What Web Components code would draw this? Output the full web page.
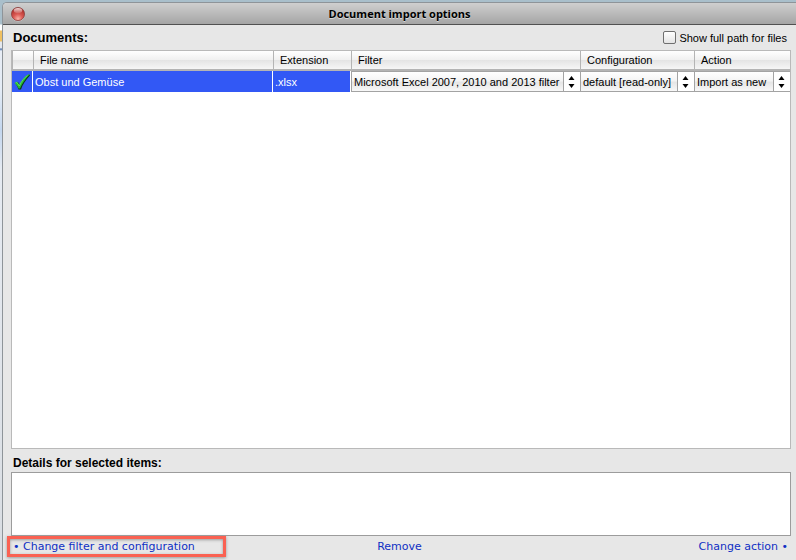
<!DOCTYPE html>
<html lang="en">
<head>
<meta charset="utf-8">
<title>Document import options</title>
<style>
  body {
    margin: 0;
    height: 100vh;
    display: flex;
    overflow: hidden;
    box-sizing: border-box;
    padding: 2px 0 0 2px;
    background: linear-gradient(#a9bfcb 0, #a9bfcb 24px, #fff 25px, #fff 30px, #f0c060 31px, #f0c060 41px, #e4e8ee 42px, #e4e8ee 48px, #4a6ea8 49px, #e8edf5 51px, #e4ecf6 90px, #c3d6ee 130px, #e6ebf2 170px, #d9dde2);
    font: 11px/14px "Liberation Sans", Arial, sans-serif;
    color: #000;
  }
</style>
</head>
<body>

<import-window caption="Document import options">
  <section-head slot="top" text="Documents:">
    <check-option>Show full path for files</check-option>
  </section-head>
  <document-table></document-table>
  <details-box label="Details for selected items:"></details-box>
  <action-bar></action-bar>
</import-window>

<script>
class ImportWindow extends HTMLElement {
  constructor() {
    super();
    this.attachShadow({mode: 'open'});
  }

  connectedCallback() {
    this.shadowRoot.innerHTML = `
      <style>
        :host {
          flex: 1;
          min-width: 0;
          display: flex;
          flex-direction: column;
          border: 1px solid #8e9499;
          border-width: 1px 0 0 1px;
          border-radius: 5px 0 0 0;
          background: #e7e7e7;
          overflow: hidden;
        }
        header {
          display: grid;
          grid-template-columns: 32px 1fr 32px;
          align-items: center;
          height: 21px;
          border-bottom: 1px solid #515151;
          background: linear-gradient(#cfcfcf, #a5a5a5);
        }
        h1 {
          margin: 0;
          text-align: center;
          font: bold 11px/14px "Open Sans", "DejaVu Sans", sans-serif;
          text-shadow: 0 1px 0 #d8d8d8;
        }
        button {
          display: flex;
          padding: 0;
          margin-left: 7px;
          width: 16px;
          border: none;
          background: none;
        }
        main {
          flex: 1;
          min-height: 0;
          display: flex;
          flex-direction: column;
          padding: 0 5px 0 8px;
        }
      </style>
      <header>
        <button aria-label="Close">
          <svg width="16" height="16" viewBox="0 0 16 16">
            <defs>
              <radialGradient id="ball" cx=".5" cy=".85" r=".85">
                <stop offset="0" stop-color="#f8b0a6"/>
                <stop offset=".4" stop-color="#dc5a54"/>
                <stop offset="1" stop-color="#a02420"/>
              </radialGradient>
              <linearGradient id="shine" x2="0" y2="1">
                <stop offset="0" stop-color="#fff" stop-opacity=".85"/>
                <stop offset="1" stop-color="#fff" stop-opacity=".1"/>
              </linearGradient>
            </defs>
            <circle cx="8" cy="8.5" r="7" fill="#e0dada" opacity=".7"/>
            <circle cx="8" cy="8" r="6.6" fill="url(#ball)" stroke="#8a4442" stroke-width=".8"/>
            <ellipse cx="8" cy="4.6" rx="4.2" ry="2.7" fill="url(#shine)"/>
          </svg>
        </button>
        <h1>${this.getAttribute('caption')}</h1>
      </header>
      <main>
        <slot name="top"></slot>
        <slot></slot>
      </main>
    `;
  }
}

class SectionHead extends HTMLElement {
  constructor() {
    super();
    this.attachShadow({mode: 'open'});
  }

  connectedCallback() {
    this.shadowRoot.innerHTML = `
      <style>
        :host {
          display: flex;
          align-items: center;
          justify-content: space-between;
          height: 25px;
          padding: 0 4px 0 2px;
        }
        h2 {
          margin: 0;
          font: bold 13px/16px "Liberation Sans", Arial, sans-serif;
        }
      </style>
      <h2>${this.getAttribute('text')}</h2>
      <slot></slot>
    `;
  }
}

class CheckOption extends HTMLElement {
  constructor() {
    super();
    this.attachShadow({mode: 'open'});
    this.shadowRoot.innerHTML = `
      <style>
        :host {
          display: block;
        }
        label {
          display: flex;
          align-items: center;
          gap: 3px;
        }
        input {
          appearance: none;
          margin: 0;
          width: 13px;
          height: 13px;
          border: 1px solid #6f6f6f;
          border-radius: 2px;
          background: linear-gradient(#fff, #e4e4e4);
        }
        input:checked {
          background: #3258f5;
        }
      </style>
      <label><input type="checkbox"><slot></slot></label>
    `;
  }
}

class DropDown extends HTMLElement {
  constructor() {
    super();
    this.attachShadow({mode: 'open'});
  }

  connectedCallback() {
    this.shadowRoot.innerHTML = `
      <style>
        :host {
          display: grid;
          grid-template-columns: 1fr 17px;
          height: 21px;
          box-sizing: border-box;
          border: 1px solid #a3a3a3;
          border-right: none;
          background: #fff;
        }
        select {
          appearance: none;
          grid-area: 1 / 1 / 2 / 3;
          min-width: 0;
          margin: 0;
          padding: 0 18px 0 2px;
          border: none;
          border-radius: 0;
          outline: none;
          background: linear-gradient(#fff 0, #f4f4f4 45%, #e6e6e6 55%, #f8f8f8 100%);
          color: #000;
          font: inherit;
        }
        svg {
          grid-area: 1 / 2;
          z-index: 1;
          box-sizing: border-box;
          width: 17px;
          height: 19px;
          border-left: 1px solid #a3a3a3;
          background: #fff;
          pointer-events: none;
        }
      </style>
      <select aria-label="${this.getAttribute('label')}">
        <option>${this.getAttribute('value')}</option>
      </select>
      <svg viewBox="0 0 16 19"><path d="M7.500 4l3 4h-6zM7.500 16l3-4h-6z"/></svg>
    `;
  }
}

class DocumentTable extends HTMLElement {
  constructor() {
    super();
    this.attachShadow({mode: 'open'});
    this.shadowRoot.innerHTML = `
      <style>
        :host {
          flex: 1;
          min-height: 0;
          display: block;
          border: 1px solid #b9b9b9;
          background: #fff;
          overflow: hidden;
        }
        table {
          width: 100%;
          table-layout: fixed;
          border-collapse: separate;
          border-spacing: 0;
        }
        .mark { width: 21px; }
        .ext { width: 78px; }
        .filter { width: 229px; }
        .config { width: 114px; }
        .action { width: 96px; }
        th, td {
          box-sizing: border-box;
          padding: 0;
          text-align: left;
          font-weight: normal;
          white-space: nowrap;
        }
        th {
          height: 20px;
          padding-left: 6px;
          border-left: 1px solid #b4b4b4;
          border-bottom: 2px solid #b4b4b4;
          background: linear-gradient(#fff, #f0f0f0 50%, #e4e4e4 51%, #f6f6f6);
        }
        td {
          height: 21px;
        }
        .plain {
          padding-left: 2px;
          border-right: 1px solid #fff;
          background: #3258f5;
          color: #fff;
        }
        .plain:first-child {
          padding-left: 1px;
        }
        svg {
          display: block;
        }
      </style>
      <table>
        <colgroup>
          <col class="mark"><col><col class="ext">
          <col class="filter"><col class="config"><col class="action">
        </colgroup>
        <thead>
          <tr>
            <th></th><th>File name</th><th>Extension</th>
            <th>Filter</th><th>Configuration</th><th>Action</th>
          </tr>
        </thead>
        <tbody>
          <tr>
            <td class="plain">
              <svg width="18" height="18" viewBox="0 0 18 18">
                <path d="M2.500 10.500L5 9L7 12C9 7.500 12.500 3.500 16.500 1.500L17 2.500C13 6.500 9.500 11.500 8 16.500H5.500C4.500 13.500 3.500 12 2.500 10.500Z" fill="#0b3a17"/>
                <path d="M1.500 10L4 8.500L6.500 12C8.500 7 12 3 16 1L16.500 1.500C12.500 5.500 9 10.500 7 15.500H5.500C4.500 13 3 11.500 1.500 10Z" fill="#25b834"/>
                <path d="M2.500 10L4 9.500L6.300 13C8.500 8 11.500 4.500 14.500 2.500" fill="none" stroke="#62e060" stroke-width=".9"/>
              </svg>
            </td>
            <td class="plain">Obst und Gemüse</td>
            <td class="plain">.xlsx</td>
            <td><drop-down label="Filter" value="Microsoft Excel 2007, 2010 and 2013 filter"></drop-down></td>
            <td><drop-down label="Configuration" value="default [read-only]"></drop-down></td>
            <td><drop-down label="Action" value="Import as new"></drop-down></td>
          </tr>
        </tbody>
      </table>
    `;
  }
}

class DetailsBox extends HTMLElement {
  constructor() {
    super();
    this.attachShadow({mode: 'open'});
  }

  connectedCallback() {
    this.shadowRoot.innerHTML = `
      <style>
        :host {
          display: block;
        }
        label {
          display: block;
          padding: 7px 2px 2px;
          font: bold 12px/14px "Liberation Sans", Arial, sans-serif;
        }
        textarea {
          display: block;
          box-sizing: border-box;
          width: 100%;
          height: 64px;
          margin: 0;
          border: 1px solid #9c9c9c;
          outline: none;
          resize: none;
          background: #fff;
          font: inherit;
        }
      </style>
      <label for="details">${this.getAttribute('label')}</label>
      <textarea id="details" readonly></textarea>
    `;
  }
}

class ActionBar extends HTMLElement {
  constructor() {
    super();
    this.attachShadow({mode: 'open'});
    this.shadowRoot.innerHTML = `
      <style>
        :host {
          display: grid;
          grid-template-columns: 1fr auto 1fr;
          align-items: center;
          height: 21px;
          padding: 0 3px 3px 0;
          font: 11px/15px "DejaVu Sans", Verdana, sans-serif;
        }
        a {
          color: #0f2fc4;
          text-decoration: none;
        }
        a:last-child {
          justify-self: end;
        }
        .marked {
          justify-self: start;
          margin-left: -4px;
          padding: 0 28px 0 3px;
          border: 3px solid #fa6152;
          box-shadow: 0 1px 3px #999, inset 0 1px 3px #999;
        }
      </style>
      <a class="marked" href="#filter">• Change filter and configuration</a>
      <a href="#remove">Remove</a>
      <a href="#action">Change action •</a>
    `;
  }
}

customElements.define('import-window', ImportWindow);
customElements.define('section-head', SectionHead);
customElements.define('check-option', CheckOption);
customElements.define('drop-down', DropDown);
customElements.define('document-table', DocumentTable);
customElements.define('details-box', DetailsBox);
customElements.define('action-bar', ActionBar);
</script>
</body>
</html>
